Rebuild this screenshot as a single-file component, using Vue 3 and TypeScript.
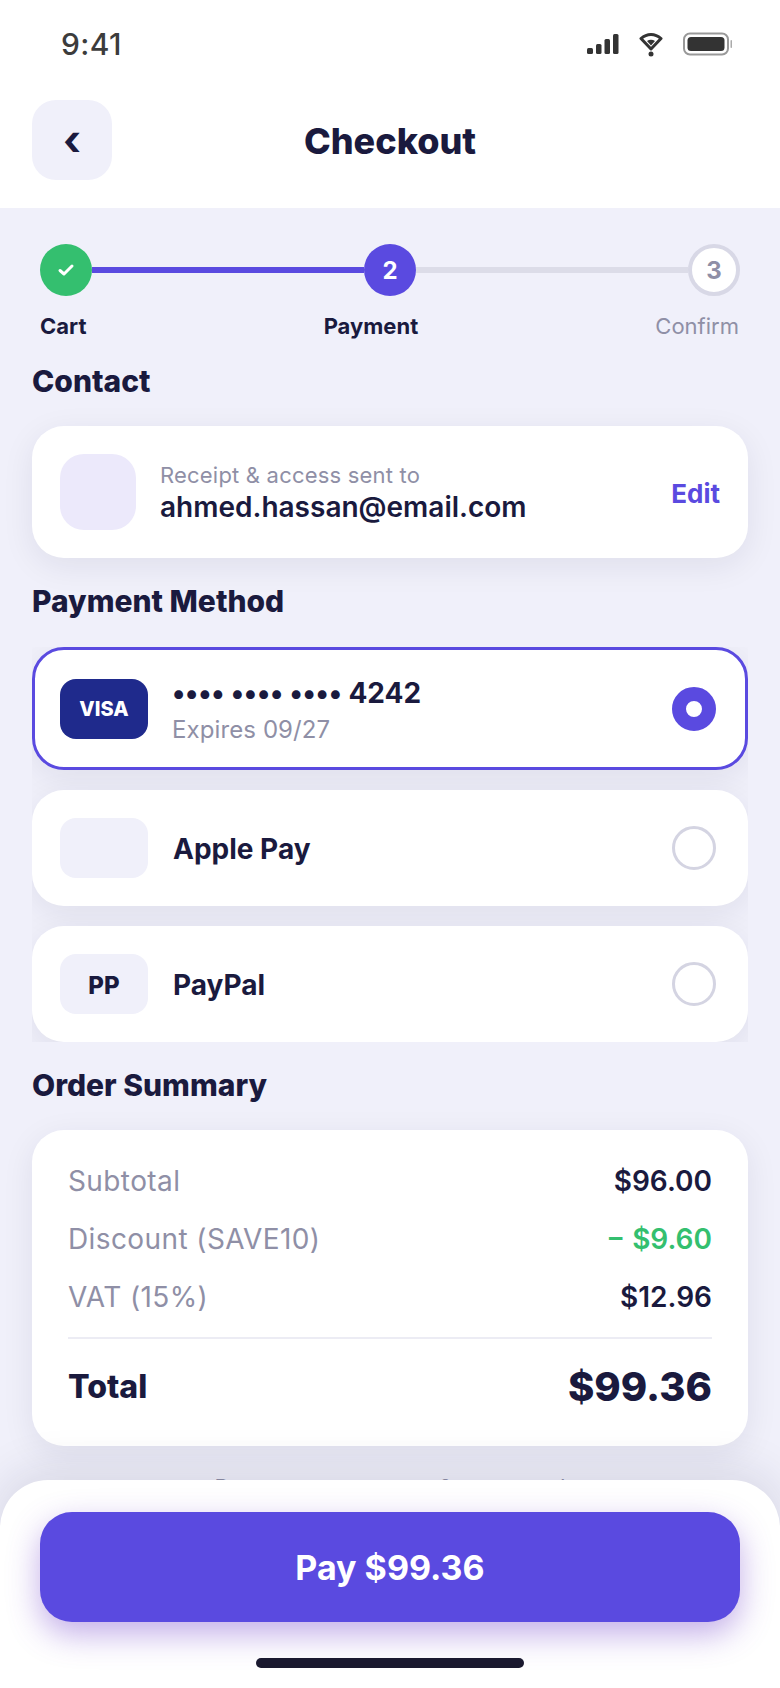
<script setup lang="ts">
interface Row { label: string; value: string; green?: boolean }
const rows: Row[] = [
  { label: 'Subtotal', value: '$96.00' },
  { label: 'Discount (SAVE10)', value: '− $9.60', green: true },
  { label: 'VAT (15%)', value: '$12.96' },
]
</script>

<template>
  <div class="phone">
    <header class="top">
      <div class="status">
        <span class="time">9:41</span>
        <div class="status-icons">
          <svg width="32" height="22" viewBox="0 0 32 22" fill="#333"><rect x="0" y="15" width="6" height="6" rx="1.5"/><rect x="9" y="11" width="5.500" height="10" rx="1.5"/><rect x="17.500" y="6" width="5.500" height="15" rx="1.5"/><rect x="26" y="1" width="5.500" height="20" rx="1.5"/></svg>
          <svg width="24" height="26" viewBox="0 0 24 26" fill="none"><path d="M2 7.500C8 2 16 2 22 7.500L12 18Z" fill="none" stroke="#333" stroke-width="3" stroke-linejoin="round"/><path d="M8 10c2.500-1.700 5.500-1.700 8 0l-4 4.500z" fill="#333"/><circle cx="12" cy="23" r="2.500" fill="#333"/></svg>
          <svg width="50" height="24" viewBox="0 0 50 24" fill="none"><rect x="1" y="1.500" width="44" height="21" rx="6" stroke="#999" stroke-width="2"/><rect x="4.500" y="5" width="37" height="14" rx="3.500" fill="#333"/><rect x="47.500" y="8" width="1.500" height="8" rx=".75" fill="#aaa"/></svg>
        </div>
      </div>
      <div class="nav">
        <button class="back" type="button" aria-label="Back">‹</button>
        <h1>Checkout</h1>
      </div>
    </header>

    <main class="content">
      <div class="stepper">
        <span class="dot done">
          <svg width="20" height="16" viewBox="0 0 20 16" fill="none"><path d="M4 8.500 8 12l8-8" stroke="#fff" stroke-width="3" stroke-linecap="round" stroke-linejoin="round"/></svg>
        </span>
        <span class="bar active"></span>
        <span class="dot current">2</span>
        <span class="bar"></span>
        <span class="dot todo">3</span>
      </div>
      <div class="step-labels">
        <span>Cart</span>
        <span>Payment</span>
        <span class="muted">Confirm</span>
      </div>

      <h2 class="h-contact">Contact</h2>
      <section class="card contact">
        <div class="contact-icon"></div>
        <div class="contact-text">
          <div class="sub">Receipt &amp; access sent to</div>
          <div class="email">ahmed.hassan@email.com</div>
        </div>
        <a class="edit">Edit</a>
      </section>

      <h2 class="h-pay">Payment Method</h2>
      <section class="methods">
        <div class="card method selected">
          <div class="logo visa">VISA</div>
          <div class="method-text">
            <div class="number"><span class="dots">•••• •••• ••••</span> 4242</div>
            <div class="sub exp">Expires 09/27</div>
          </div>
          <span class="radio on"></span>
        </div>
        <div class="card method">
          <div class="logo"></div>
          <div class="method-name">Apple Pay</div>
          <span class="radio"></span>
        </div>
        <div class="card method">
          <div class="logo pp">PP</div>
          <div class="method-name">PayPal</div>
          <span class="radio"></span>
        </div>
      </section>

      <h2 class="h-order">Order Summary</h2>
      <section class="card summary">
        <div v-for="r in rows" :key="r.label" class="row">
          <span class="row-label">{{ r.label }}</span>
          <span class="row-value" :class="{ green: r.green }">{{ r.value }}</span>
        </div>
        <div class="divider"></div>
        <div class="total">
          <span>Total</span>
          <span class="total-value">$99.36</span>
        </div>
      </section>
      <p class="secure">Payments are secure &amp; encrypted</p>
    </main>

    <footer class="footer">
      <button class="pay" type="button">Pay $99.36</button>
      <div class="home"></div>
    </footer>
  </div>
</template>

<style>
html, body { margin: 0; background: #f0f0fa; }
</style>

<style scoped>
* { box-sizing: border-box; }
.phone { width: 780px; height: 1688px; position: relative; overflow: hidden; display: flex; flex-direction: column; background: #f0f0fa; font-family: Inter, "Liberation Sans", sans-serif; color: #1a1a3e; }
.top { background: #fff; height: 208px; flex: none; }
.status { height: 88px; padding: 0 47px 0 61px; display: flex; align-items: center; justify-content: space-between; }
.time { font-size: 30px; font-weight: 500; color: #3c3c3c; letter-spacing: .4px; }
.status-icons { display: flex; align-items: center; gap: 20px; }
.nav { height: 80px; margin-top: 12px; padding: 0 32px; position: relative; display: flex; align-items: center; justify-content: center; }
.back { position: absolute; left: 32px; top: 0; width: 80px; height: 80px; border: 0; border-radius: 24px; background: #f0f0fa; padding: 0; display: flex; align-items: center; justify-content: center; font: 700 42px/80px Inter, "Liberation Sans", sans-serif; color: #1a1a3e; }
h1 { margin: 2px 0 0; font-size: 36px; font-weight: 800; line-height: 44px; }
.content { flex: 1; padding: 36px 32px 0; min-height: 0; }
.stepper { display: flex; align-items: center; padding: 0 8px; height: 52px; }
.dot { width: 52px; height: 52px; border-radius: 50%; flex: none; display: flex; align-items: center; justify-content: center; font-size: 24px; font-weight: 700; }
.done { background: #34bf6f; }
.current { background: #5a4ae0; color: #fff; }
.todo { background: #fff; border: 4px solid #d8d8e6; color: #8f8fa6; }
.bar { flex: 1; height: 6px; background: #dcdce8; }
.bar.active { background: #5a4ae0; }
.step-labels { display: flex; justify-content: space-between; padding: 0 9px 0 8px; margin-top: 16px; font-size: 22px; font-weight: 700; line-height: 28px; }
.step-labels .muted { color: #8f8fa6; font-weight: 400; }
h2 { margin: 0; font-size: 30px; font-weight: 800; line-height: 36px; }
.h-contact { margin-top: 23px; }
.h-pay { margin-top: 25px; }
.h-order { margin-top: 25px; }
.card { background: #fff; border-radius: 32px; box-shadow: 0 8px 32px rgba(26, 26, 62, .08); }
.contact { margin-top: 27px; height: 132px; padding: 0 28px; display: flex; align-items: center; }
.contact-icon { width: 76px; height: 76px; border-radius: 24px; background: #ece9fb; flex: none; }
.contact-text { margin-left: 24px; flex: 1; padding-top: 1px; }
.sub { font-size: 22px; color: #8f8fa6; line-height: 28px; letter-spacing: .2px; }
.email { font-size: 28px; font-weight: 600; line-height: 34px; margin-top: 1px; }
.edit { font-size: 26px; font-weight: 700; color: #5a4ae0; padding-top: 2px; }
.methods { margin-top: 28px; display: flex; flex-direction: column; gap: 20px; overflow: hidden; }
.method { height: 116px; padding: 0 32px 0 28px; display: flex; align-items: center; flex: none; }
.method.selected { height: 123px; border: 3px solid #5a4ae0; padding: 0 29px 0 25px; }
.logo { width: 88px; height: 60px; border-radius: 16px; background: #f0f0fa; flex: none; display: flex; align-items: center; justify-content: center; font-size: 22px; font-weight: 800; }
.logo.pp { font-size: 24px; padding-top: 2px; }
.visa { background: #1f2a8c; color: #fff; font-size: 20px; }
.method-text { margin-left: 24px; flex: 1; padding-top: 2px; }
.method-name { margin-left: 25px; flex: 1; font-size: 28px; font-weight: 700; padding-top: 2px; }
.number { font-size: 28px; font-weight: 700; line-height: 36px; }
.dots { letter-spacing: -.2px; }
.exp { font-size: 24px; margin-top: 4px; line-height: 30px; letter-spacing: .1px; }
.radio { width: 44px; height: 44px; border-radius: 50%; border: 3px solid #d4d4e2; flex: none; }
.radio.on { background: #fff; border: 14px solid #5a4ae0; }
.summary { margin-top: 27px; height: 316px; padding: 37px 36px 0; }
.row { display: flex; justify-content: space-between; align-items: center; height: 28px; margin-bottom: 30px; }
.row-label { font-size: 28px; color: #8f8fa6; letter-spacing: .4px; }
.row-value { font-size: 28px; font-weight: 600; }
.green { color: #34bf6f; }
.divider { height: 2px; background: #ececf4; margin-top: -4px; }
.total { display: flex; justify-content: space-between; align-items: center; margin-top: 23px; font-size: 32px; font-weight: 800; }
.total-value { font-size: 40px; }
.secure { margin: 28px 0 0; text-align: center; font-size: 22px; color: #8f8fa6; }
.footer { position: absolute; left: 0; right: 0; bottom: 0; height: 208px; background: #fff; border-radius: 48px 48px 0 0; padding: 32px 40px 0; box-shadow: 0 -8px 48px rgba(26, 26, 62, .12); }
.pay { width: 100%; height: 110px; border: 0; border-radius: 32px; background: #5a4ae0; color: #fff; font: 700 34px Inter, "Liberation Sans", sans-serif; box-shadow: 0 12px 32px rgba(110, 60, 200, .42); }
.home { width: 268px; height: 10px; border-radius: 5px; background: #1a1a2e; margin: 36px auto 0; }
</style>
